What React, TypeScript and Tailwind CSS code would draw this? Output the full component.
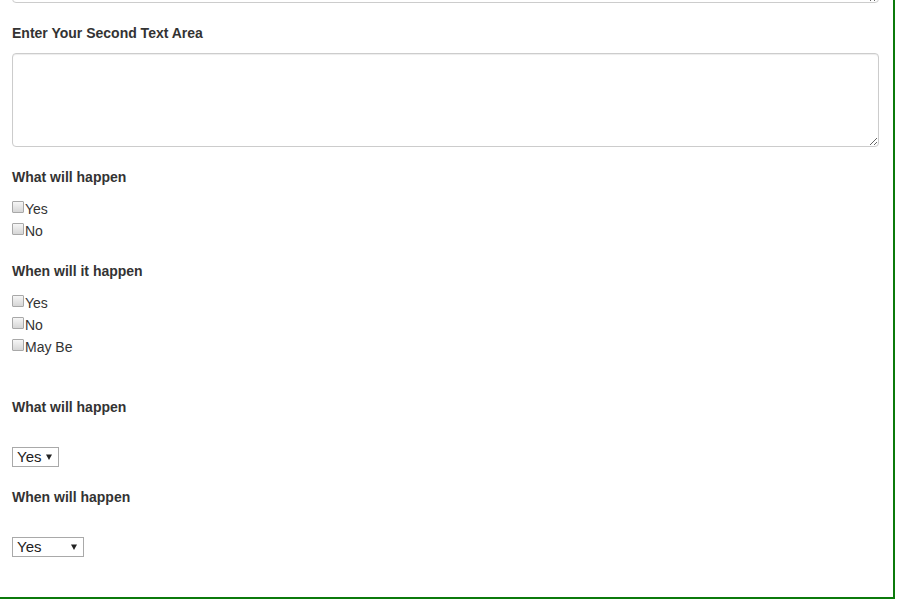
import React from "react"

const labelCls = "block h-[20px] text-[14px] leading-[20px] font-bold text-[#333]"

function Check({ text }: { text: string }) {
  return (
    <label className="flex h-[22px] items-start text-[14px] leading-[22px] text-[#333]">
      <input
        type="checkbox"
        className="mt-[3px] mr-[1px] h-[12px] w-[12px] appearance-none rounded-[1px] border border-[#a8a8a8] bg-gradient-to-b from-[#f6f6f6] to-[#d6d6d6]"
      />
      <span>{text}</span>
    </label>
  )
}

function Select({ width }: { width: string }) {
  return (
    <div className={`relative h-[20px] ${width}`}>
      <select className="block h-[20px] w-full appearance-none rounded-none border border-[#a9a9a9] bg-white pl-[4px] font-['Liberation_Sans',Arial,sans-serif] text-[15px] leading-[18px] text-[#222] outline-none">
        <option>Yes</option>
        <option>No</option>
      </select>
      <svg className="pointer-events-none absolute right-[7px] top-[7px]" width="6" height="6" viewBox="0 0 6 6">
        <polygon points="0,0.5 6,0.5 3,6" fill="#222" />
      </svg>
    </div>
  )
}

export default function App() {
  return (
    <div className="h-[599px] w-[895px] overflow-hidden border-r-2 border-b-2 border-[#0b7a0b] bg-white pl-[12px] font-['Liberation_Sans',Arial,sans-serif]">
      <div className="flex flex-col">
        <textarea className="-mt-[91px] h-[94px] w-[867px] rounded-[4px] border border-[#ccc] shadow-[inset_0_1px_1px_rgba(0,0,0,0.075)]" />

        <label className={`mt-[20px] ${labelCls}`}>Enter Your Second Text Area</label>
        <textarea className="mt-[10px] h-[94px] w-[867px] rounded-[4px] border border-[#ccc] shadow-[inset_0_1px_1px_rgba(0,0,0,0.075)]" />

        <label className={`mt-[20px] ${labelCls}`}>What will happen</label>
        <div className="mt-[11px] flex flex-col">
          <Check text="Yes" />
          <Check text="No" />
        </div>

        <label className={`mt-[19px] ${labelCls}`}>When will it happen</label>
        <div className="mt-[11px] flex flex-col">
          <Check text="Yes" />
          <Check text="No" />
          <Check text="May Be" />
        </div>

        <label className={`mt-[39px] ${labelCls}`}>What will happen</label>
        <div className="mt-[30px]">
          <Select width="w-[47px]" />
        </div>

        <label className={`mt-[20px] ${labelCls}`}>When will happen</label>
        <div className="mt-[30px]">
          <Select width="w-[72px]" />
        </div>
      </div>
    </div>
  )
}
